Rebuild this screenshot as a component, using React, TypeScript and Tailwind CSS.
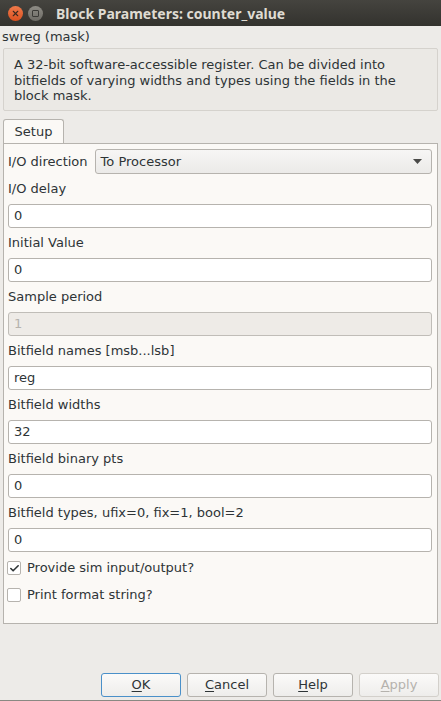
import { Check, X } from 'lucide-react'

const font = { fontFamily: '"DejaVu Sans", sans-serif' }

function Field({ label, value, disabled }: { label: string; value: string; disabled?: boolean }) {
	return (
		<div className="flex flex-col">
			<div className="h-[30px] flex items-center text-[13px] text-[#2e3436] pl-[4px]">{label}</div>
			<div
				className={`h-[24px] ml-[4px] mr-[5px] rounded-[3px] border flex items-center px-[5px] text-[13px] ${
					disabled ? 'bg-[#eeebe7] border-[#c0bdb8] text-[#b5b2ad]' : 'bg-white border-[#b6b3ae] text-[#2e3436]'
				}`}
			>
				{value}
			</div>
		</div>
	)
}

function Btn({ u, rest, blue, disabled }: { u: string; rest: string; blue?: boolean; disabled?: boolean }) {
	return (
		<div
			className={`w-[80px] h-[24px] rounded-[3px] border flex items-center justify-center text-[13px] bg-gradient-to-b from-[#fbfaf9] to-[#eeedeb] ${
				blue ? 'border-[#4a90c9]' : disabled ? 'border-[#d3d0cb]' : 'border-[#b6b3ae]'
			} ${disabled ? 'text-[#b5b2ad]' : 'text-[#2e3436]'}`}
		>
			<span className="underline underline-offset-2">{u}</span>
			<span>{rest}</span>
		</div>
	)
}

export default function App() {
	return (
		<div className="w-[441px] h-[701px] bg-[#edebe8] flex flex-col overflow-hidden" style={font}>
			{/* title bar */}
			<div className="h-[26px] bg-gradient-to-b from-[#45443f] to-[#33322e] flex items-center pl-[8px] gap-[5px] shrink-0">
				<div className="w-[15px] h-[15px] rounded-full bg-gradient-to-b from-[#f07a4a] to-[#d9501e] flex items-center justify-center">
					<X size={9} strokeWidth={3} color="#3a2a20" />
				</div>
				<div className="w-[15px] h-[15px] rounded-full bg-gradient-to-b from-[#8e8c85] to-[#6d6b65] flex items-center justify-center">
					<div className="w-[7px] h-[7px] border border-[#3b3a36] rounded-[1px]" />
				</div>
				<div
					className="ml-[8px] text-[14px] font-bold text-[#dfdbd2]"
					style={{ fontFamily: '"Noto Sans", "DejaVu Sans", sans-serif' }}
				>
					Block Parameters: counter_value
				</div>
			</div>

			<div className="h-[20px] flex items-center pl-[2px] text-[13px] text-[#2e3436] mt-[1px]">swreg (mask)</div>

			<div className="mx-[3px] mt-[1px] h-[63px] border border-[#d5d2cd] bg-[#ebe9e5] rounded-[2px] px-[10px] pt-[8px] text-[13px] leading-[15.5px] text-[#2e3436]">
				A 32-bit software-accessible register. Can be divided into bitfields of varying widths and types using the fields in the block mask.
			</div>

			{/* tab */}
			<div className="mx-[3px] mt-[8px] flex">
				<div className="w-[61px] h-[25px] border border-b-0 border-[#b6b3ae] rounded-t-[3px] bg-[#fbf9f6] flex items-center justify-center text-[13px] text-[#2e3436]">
					Setup
				</div>
			</div>
			<div className="mx-[3px] h-[481px] border border-[#b6b3ae] bg-[#fbf9f6] flex flex-col -mt-px">
				<div className="flex items-center mt-[5px] pl-[4px] gap-[7px]">
					<div className="text-[13px] text-[#2e3436]">I/O direction</div>
					<div className="flex-1 mr-[5px] h-[25px] rounded-[3px] border border-[#b6b3ae] bg-gradient-to-b from-[#f7f6f5] to-[#ebeae8] flex items-center pl-[5px] pr-[9px] text-[13px] text-[#2e3436]">
						<span className="flex-1">To Processor</span>
						<svg width="9" height="5" viewBox="0 0 9 5"><path d="M0 0h9L4.5 5z" fill="#4a4a48" /></svg>
					</div>
				</div>
				<Field label="I/O delay" value="0" />
				<Field label="Initial Value" value="0" />
				<Field label="Sample period" value="1" disabled />
				<Field label="Bitfield names [msb...lsb]" value="reg" />
				<Field label="Bitfield widths" value="32" />
				<Field label="Bitfield binary pts" value="0" />
				<Field label="Bitfield types, ufix=0, fix=1, bool=2" value="0" />
				<div className="flex items-center gap-[6px] pl-[3px] mt-[9px] h-[14px] text-[13px] text-[#2e3436]">
					<div className="w-[14px] h-[14px] border border-[#b6b3ae] bg-white rounded-[2px] flex items-center justify-center">
						<Check size={11} strokeWidth={3.5} color="#2e3436" />
					</div>
					Provide sim input/output?
				</div>
				<div className="flex items-center gap-[6px] pl-[3px] mt-[13px] h-[14px] text-[13px] text-[#2e3436]">
					<div className="w-[14px] h-[14px] border border-[#b6b3ae] bg-white rounded-[2px]" />
					Print format string?
				</div>
			</div>

			<div className="flex-1" />
			<div className="flex justify-end gap-[6px] pr-[2px] mb-[3px]">
				<Btn u="O" rest="K" blue />
				<Btn u="C" rest="ancel" />
				<Btn u="H" rest="elp" />
				<Btn u="A" rest="pply" disabled />
			</div>
			<div className="h-[1px] bg-[#8a8882]" />
		</div>
	)
}
